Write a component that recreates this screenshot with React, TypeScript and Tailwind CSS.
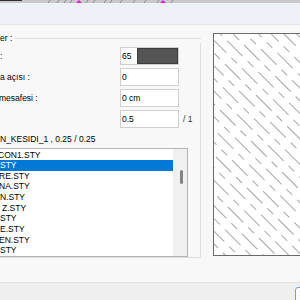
import React from 'react'

const items = [
  { text: 'CON1.STY', shift: -2 },
  { text: 'STY', shift: 0, selected: true },
  { text: 'RE.STY', shift: -1 },
  { text: 'NA.STY', shift: -1 },
  { text: 'N.STY', shift: 0 },
  { text: 'Z.STY', shift: 2 },
  { text: 'STY', shift: 0 },
  { text: 'E.STY', shift: 0 },
  { text: 'EN.STY', shift: -1 },
  { text: 'STY', shift: 0 },
]

const Ruler = () => (
  <svg width="300" height="3" className="block shrink-0">
    <rect x="0" y="0" width="300" height="3" fill="#c9c9c9" />
    <rect x="0" y="0" width="22" height="1" fill="#2d2d2d" />
    {[48, 57, 64, 70, 86, 93, 104, 110, 120, 133, 144, 157, 171].map((x) => (
      <line key={x} x1={x} y1="3" x2={x + 2} y2="0" stroke="#7a7a7a" strokeWidth="0.8" />
    ))}
    <polygon points="76,3 79,0 82,3" fill="#e21ee2" />
    <polygon points="160,3 163,0 166,3" fill="#e21ee2" />
  </svg>
)

const Hatch = () => (
  <svg className="block h-full w-full">
    <defs>
      <pattern
        id="hatch"
        width="44"
        height="27"
        patternUnits="userSpaceOnUse"
        patternTransform="rotate(45)"
      >
        <line x1="0" y1="4.5" x2="44" y2="4.5" stroke="#9c9c9c" strokeWidth="0.9" strokeDasharray="22 7 8 7" />
        <line x1="0" y1="13.5" x2="44" y2="13.5" stroke="#9c9c9c" strokeWidth="0.9" strokeDasharray="22 7 8 7" strokeDashoffset="15" />
        <line x1="0" y1="22.5" x2="44" y2="22.5" stroke="#9c9c9c" strokeWidth="0.9" strokeDasharray="22 7 8 7" strokeDashoffset="30" />
      </pattern>
    </defs>
    <rect width="100%" height="100%" fill="url(#hatch)" />
  </svg>
)

const Field = ({ value }: { value: string }) => (
  <div className="flex h-[18px] w-[59px] shrink-0 items-center border border-[#cfcfcf] bg-white pl-[1px]">
    {value}
  </div>
)

export default function App() {
  return (
    <div
      className="flex h-[300px] w-[300px] flex-col overflow-hidden bg-[#f8f8f8] text-[8.5px] leading-none whitespace-nowrap text-black"
      style={{ fontFamily: '"Liberation Sans", Arial, sans-serif' }}
    >
      <Ruler />
      <div className="h-[22px] shrink-0 border-b border-[#e4e6ea] bg-[#eef1f8]" />

      <div className="flex h-[247px] shrink-0">
        {/* group box */}
        <div className="-ml-[20px] mt-[9px] flex h-[224px] w-[221px] shrink-0 flex-col">
          <div className="flex h-[10px] items-center pl-[20px]">
            <span>er :</span>
            <div className="ml-[3px] h-px flex-1 bg-[#dedede]" />
          </div>
          <div className="flex flex-1 flex-col border-r border-b border-[#dedede] pr-[12px] pt-[4px]">
            <div className="flex flex-col gap-[3px]">
              <div className="flex h-[18px] items-center">
                <span className="w-[140px] shrink-0 pl-[20px]">:</span>
                <div className="flex h-[18px] w-[59px] shrink-0 border border-[#cfcfcf] bg-white">
                  <div className="flex w-[16px] items-center pl-[1px]">65</div>
                  <div className="flex-1 border border-[#3c3c3c] bg-[#555555]" />
                </div>
              </div>
              <div className="flex h-[18px] items-center">
                <span className="w-[140px] shrink-0 pl-[20px]">a açısı :</span>
                <Field value="0" />
              </div>
              <div className="flex h-[18px] items-center">
                <span className="w-[140px] shrink-0 pl-[19px]">mesafesi :</span>
                <Field value="0 cm" />
              </div>
              <div className="flex h-[18px] items-center">
                <span className="w-[140px] shrink-0" />
                <Field value="0.5" />
                <span className="ml-[4px] shrink-0 text-[#333]">/ 1</span>
              </div>
            </div>

            <div className="mt-[6px] flex h-[10px] items-center pl-[20px]">
              N_KESIDI_1 , 0.25 / 0.25
            </div>

            <div className="mt-[4px] flex flex-1 border-t border-r border-b border-[#b4b4b4] bg-white">
              <div className="flex flex-1 flex-col">
                {items.map((it, i) => (
                  <div
                    key={i}
                    className={
                      it.selected
                        ? 'flex h-[10.67px] items-center bg-[#0078d7] text-white'
                        : 'flex h-[10.67px] items-center'
                    }
                  >
                    <span style={{ paddingLeft: 20 + it.shift }}>{it.text}</span>
                  </div>
                ))}
              </div>
              <div className="flex w-[14px] flex-col items-center bg-[#f0f0f0] pt-[21px] pl-[2px]">
                <div className="h-[14px] w-[3px] rounded-full bg-[#858585]" />
              </div>
            </div>
          </div>
        </div>

        {/* preview */}
        <div className="ml-[12px] mt-[8px] h-[223px] w-[100px] shrink-0 border border-[#6b6b6b] bg-white">
          <Hatch />
        </div>
      </div>

      <div className="h-[10px] shrink-0" />
      <div className="flex h-[25px] shrink-0 items-center border-t border-[#e2e2e2] bg-[#efefef]">
        <div className="ml-[295px] h-[17px] w-[20px] shrink-0 rounded-[3px] border border-[#5ea6e8] bg-[#fafafa]" />
      </div>
      <div className="flex h-[3px] shrink-0 bg-[#a3a3a3]">
        <div className="ml-[35px] h-full w-px bg-[#6f6f6f]" />
        <div className="ml-[17px] h-full w-px bg-[#6f6f6f]" />
        <div className="ml-[33px] h-full w-px bg-[#6f6f6f]" />
      </div>
    </div>
  )
}
